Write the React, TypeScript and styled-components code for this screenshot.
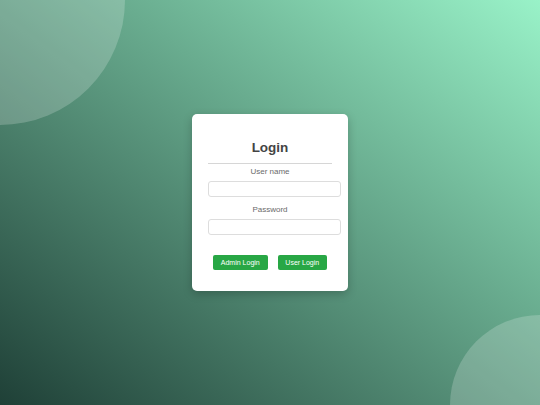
import React from "react";
import styled, { createGlobalStyle } from "styled-components";

const Global = createGlobalStyle`
  html, body { margin: 0; padding: 0; height: 100%; }
  body { font-family: "Liberation Sans", Arial, sans-serif; overflow: hidden; }
  * { box-sizing: border-box; }
`;

const Page = styled.div`
  position: relative;
  width: 100vw;
  height: 100vh;
  overflow: hidden;
  display: flex;
  align-items: center;
  justify-content: center;
  background: linear-gradient(to top right, #1f4037, #99f2c8);
`;

const Bubble = styled.div<{ $size: number; $corner: "tl" | "br" }>`
  position: absolute;
  width: ${(p) => p.$size}px;
  height: ${(p) => p.$size}px;
  border-radius: 50%;
  background: rgba(255, 255, 255, 0.2);
  ${(p) =>
    p.$corner === "tl"
      ? `top: ${-p.$size / 2}px; left: ${-p.$size / 2}px;`
      : `bottom: ${-p.$size / 2}px; right: ${-p.$size / 2}px;`}
`;

const Card = styled.form`
  position: relative;
  width: 156px;
  padding: 16px;
  background: #fff;
  border-radius: 5px;
  box-shadow: 0 3px 10px rgba(0, 0, 0, 0.22);
  display: flex;
  flex-direction: column;
`;

const Title = styled.h2`
  margin: 10px 0 0;
  font-size: 13.5px;
  line-height: 15px;
  font-weight: 700;
  color: #444;
  text-align: center;
`;

const Rule = styled.hr`
  margin: 8.5px 0 2.8px;
  border: none;
  border-top: 1px solid #d6d6d6;
  height: 0;
`;

const Label = styled.label<{ $top?: number }>`
  display: block;
  margin: ${(p) => p.$top ?? 0}px 0 5px;
  font-size: 8px;
  line-height: 9px;
  color: #6a6a6a;
  text-align: center;
`;

const Input = styled.input`
  display: block;
  width: calc(100% + 9px);
  height: 16px;
  padding: 0 3.5px;
  border: 1px solid #ddd;
  border-radius: 3px;
  font-size: 8px;
  font-family: inherit;
  outline: none;
  background: #fff;
`;

const Actions = styled.div`
  display: flex;
  justify-content: center;
  gap: 10px;
  margin: 20px 0 5px;
`;

const Button = styled.button`
  height: 15.5px;
  padding: 0 7.8px;
  border: none;
  border-radius: 2px;
  background: #28a745;
  color: #fff;
  font-family: inherit;
  font-size: 7px;
  line-height: 15.5px;
  cursor: pointer;
`;

export default function App() {
  return (
    <>
      <Global />
      <Page>
        <Bubble $size={250} $corner="tl" />
        <Bubble $size={180} $corner="br" />
        <Card onSubmit={(e) => e.preventDefault()}>
          <Title>Login</Title>
          <Rule />
          <Label htmlFor="username">User name</Label>
          <Input id="username" type="text" />
          <Label htmlFor="password" $top={7.5}>
            Password
          </Label>
          <Input id="password" type="password" />
          <Actions>
            <Button type="button">Admin Login</Button>
            <Button type="button">User Login</Button>
          </Actions>
        </Card>
      </Page>
    </>
  );
}
